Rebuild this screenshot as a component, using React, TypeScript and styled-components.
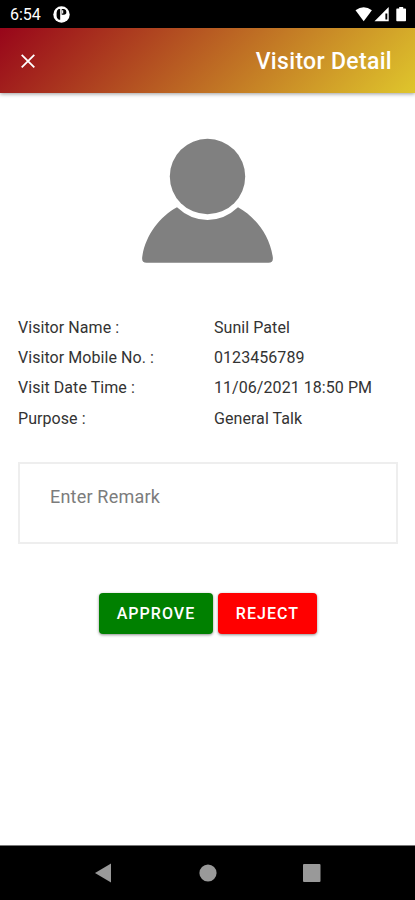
import React from "react";
import styled, { createGlobalStyle } from "styled-components";

const GlobalStyle = createGlobalStyle`
  * { box-sizing: border-box; }
  body { margin: 0; background: #fff; font-family: Roboto, "Liberation Sans", sans-serif; }
`;

const Screen = styled.div`
  width: 415px;
  height: 900px;
  display: flex;
  flex-direction: column;
  background: #fff;
  overflow: hidden;
`;

const StatusBar = styled.div`
  height: 28px;
  flex: none;
  display: flex;
  align-items: center;
  justify-content: space-between;
  padding: 1px 7px 0 10px;
  background: #000;
  color: #fff;
`;

const StatusGroup = styled.div`
  display: flex;
  align-items: center;
  svg { display: block; }
`;

const Clock = styled.span`
  width: 43px;
  font-size: 16px;
  line-height: 20px;
  padding-top: 1px;
  letter-spacing: 0;
`;

const Header = styled.header`
  height: 65px;
  flex: none;
  display: flex;
  align-items: center;
  justify-content: space-between;
  padding: 0 23px 0 20px;
  color: #fff;
  background: linear-gradient(135deg, #98051a 0%, #dfc62c 100%);
  box-shadow: 0 1px 4px rgba(0, 0, 0, 0.4);
`;

const IconButton = styled.button`
  width: 16px;
  height: 16px;
  padding: 0;
  border: 0;
  background: none;
  color: inherit;
  svg { display: block; }
`;

const Title = styled.h1`
  margin: 2px 0 0;
  font-size: 23px;
  font-weight: 500;
  line-height: 30px;
  letter-spacing: 0.32px;
`;

const Content = styled.main`
  flex: 1;
  display: flex;
  flex-direction: column;
  padding: 45px 17px 0 18px;
`;

const Avatar = styled.svg`
  display: block;
  align-self: center;
  flex: none;
  margin-right: 1px;
`;

const Details = styled.dl`
  margin: 48px 0 0;
`;

const DetailRow = styled.div`
  display: grid;
  grid-template-columns: 196px 1fr;
  height: 30.4px;
  align-items: center;
  font-size: 16px;
  letter-spacing: 0.06px;
  color: #333;
  white-space: nowrap;
`;

const Label = styled.dt`
  margin: 0;
`;

const Value = styled.dd`
  margin: 0;
`;

const Remark = styled.textarea`
  display: block;
  width: 380px;
  height: 82px;
  margin-top: 28px;
  padding: 20px 30px;
  border: 2px solid #eee;
  border-radius: 0;
  outline: 0;
  resize: none;
  font: 400 18px/26px Roboto, "Liberation Sans", sans-serif;
  letter-spacing: 0.2px;
  background: #fff;
  &::placeholder { color: #7c7c7c; opacity: 1; }
`;

const Actions = styled.div`
  display: flex;
  gap: 5px;
  margin: 49px 0 0 81px;
`;

const ActionButton = styled.button<{ $color: string; $width: number }>`
  width: ${(p) => p.$width}px;
  height: 41px;
  padding: 0;
  border: 0;
  border-radius: 4px;
  background: ${(p) => p.$color};
  color: #fff;
  font: 500 16px/41px Roboto, "Liberation Sans", sans-serif;
  letter-spacing: 1.05px;
  box-shadow: 0 1px 3px rgba(0, 0, 0, 0.45);
`;

const NavBar = styled.nav`
  height: 55px;
  flex: none;
  display: flex;
  justify-content: center;
  align-items: center;
  gap: 86px;
  border-top: 1px solid #777;
  background: #000;
  svg { display: block; }
`;

const details = [
  { label: "Visitor Name :", value: "Sunil Patel" },
  { label: "Visitor Mobile No. :", value: "0123456789" },
  { label: "Visit Date Time :", value: "11/06/2021 18:50 PM" },
  { label: "Purpose :", value: "General Talk" },
];

export default function App() {
  return (
    <>
      <GlobalStyle />
      <Screen>
        <StatusBar>
          <StatusGroup>
            <Clock>6:54</Clock>
            <svg width="17" height="17" viewBox="0 0 17 17">
              <circle cx="8.5" cy="8.5" r="8.2" fill="#fff" />
              <path d="M7.2 3H5.6Q3.6 4.1 3.6 6.7V10Q3.6 12.6 5.8 13.8H7.2Z" fill="#000" />
              <path d="M8.7 3H11Q13.4 3.5 13.4 6Q13.4 8.7 10.8 8.7H8.7Z" fill="#000" />
              <path d="M9.1 4.3H10.2V7.4H9.1Z" fill="#fff" />
            </svg>
          </StatusGroup>
          <StatusGroup>
            <svg width="53" height="17" viewBox="0 0 53 17" fill="#fff">
              <path d="M.5 4.3Q8.7-2 16.9 4.3L8.7 15.2Z" />
              <path fillRule="evenodd" d="M33.7 1V15.2H19.5ZM30.4 7.4V13.5H32.3V7.4Z" />
              <path d="M44.2 .9H48.2V2.5H50.3Q51 2.5 51 3.2V14.4Q51 15.2 50.3 15.2H42Q41.3 15.2 41.3 14.4V3.2Q41.3 2.5 42 2.5H44.2Z" />
            </svg>
          </StatusGroup>
        </StatusBar>
        <Header>
          <IconButton aria-label="Close">
            <svg width="16" height="16" viewBox="0 0 16 16" fill="none" stroke="currentColor" strokeWidth="1.8">
              <path d="M1.7 1.8L14.3 14.4M14.3 1.8L1.7 14.4" />
            </svg>
          </IconButton>
          <Title>Visitor Detail</Title>
        </Header>
        <Content>
          <Avatar width="133" height="126" viewBox="0 0 133 126" fill="#808080">
            <circle cx="66.5" cy="38.5" r="37.7" />
            <path d="M36 69.3C19 78.5 4.5 97 1.3 118.5Q.2 124.8 5.5 124.8H127.5Q132.8 124.8 131.7 118.5C128.5 97 114 78.5 97 69.3Q83.5 82 66.5 82T36 69.3Z" />
          </Avatar>
          <Details>
            {details.map((d) => (
              <DetailRow key={d.label}>
                <Label>{d.label}</Label>
                <Value>{d.value}</Value>
              </DetailRow>
            ))}
          </Details>
          <Remark placeholder="Enter Remark" />
          <Actions>
            <ActionButton $color="#008000" $width={114}>APPROVE</ActionButton>
            <ActionButton $color="#ff0000" $width={99}>REJECT</ActionButton>
          </Actions>
        </Content>
        <NavBar>
          <svg width="18" height="20" viewBox="0 0 18 20" fill="#999"><path d="M0 10L16 .5V19.5Z" /></svg>
          <svg width="18" height="18" viewBox="0 0 18 18" fill="#999"><circle cx="9" cy="9" r="8.6" /></svg>
          <svg width="18" height="18" viewBox="0 0 18 18" fill="#999"><rect width="17.5" height="18" rx="1" /></svg>
        </NavBar>
      </Screen>
    </>
  );
}
